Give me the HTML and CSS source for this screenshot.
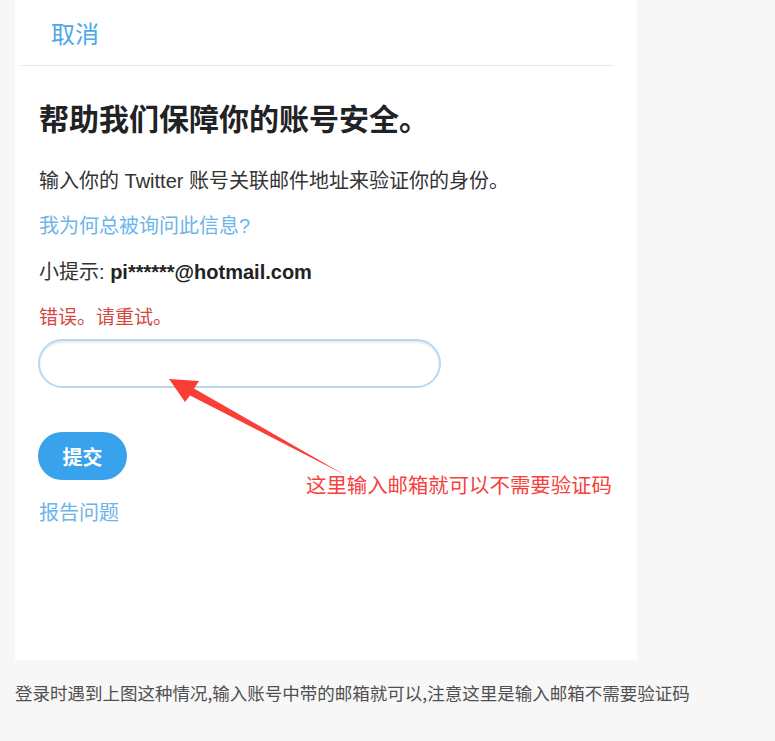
FILE: index.html
```html
<!DOCTYPE html>
<html lang="zh-CN">
<head>
<meta charset="utf-8">
<title>帮助我们保障你的账号安全</title>
<link rel="stylesheet" href="styles.css">
</head>
<body>
<div class="page">
  <div class="panel">
    <div class="header"><span class="cancel">取消</span></div>
    <div class="content">
      <h1 class="title">帮助我们保障你的账号安全。</h1>
      <p class="desc">输入你的 Twitter 账号关联邮件地址来验证你的身份。</p>
      <p class="link">我为何总被询问此信息?</p>
      <p class="hint">小提示: <b>pi******@hotmail.com</b></p>
      <p class="error">错误。请重试。</p>
      <div class="input"></div>
      <div class="button">提交</div>
      <p class="link report">报告问题</p>
    </div>
    <svg class="arrow" width="622" height="660" viewBox="0 0 622 660">
      <polygon points="154,379 184,381 179,388.5 330,475 175,395.5 170,402" fill="#fb3d38"/>
    </svg>
    <div class="note">这里输入邮箱就可以不需要验证码</div>
  </div>
  <p class="caption">登录时遇到上图这种情况,输入账号中带的邮箱就可以,注意这里是输入邮箱不需要验证码</p>
</div>
</body>
</html>
```
FILE: styles.css
```css
* { box-sizing: border-box; }
html, body {
  margin: 0;
  padding: 0;
  background: #f7f7f7;
}
body {
  font-family: "Liberation Sans", "Noto Sans CJK SC", sans-serif;
  color: #333;
}
.page {
  padding-left: 15px;
}
.panel {
  position: relative;
  width: 622px;
  height: 660px;
  background: #fff;
}
.header {
  margin: 0 24px 0 6px;
  height: 66px;
  border-bottom: 1px solid #e3e8ec;
  padding-left: 30px;
  padding-top: 19px;
}
.cancel {
  display: block;
  font-size: 24px;
  line-height: 31px;
  color: #4ea8ea;
}
.content {
  padding-left: 24px;
}
.title {
  margin: 36px 0 0;
  font-size: 30px;
  line-height: 36px;
  font-weight: bold;
  color: #1f2326;
}
.desc, .link, .hint, .error {
  margin: 0;
  font-size: 20px;
  line-height: 28px;
}
.desc {
  margin-top: 29px;
  color: #333;
}
.link {
  margin-top: 17px;
  color: #6cb5ea;
}
.hint {
  margin-top: 18px;
  color: #333;
}
.hint b {
  color: #222;
}
.error {
  margin-top: 18px;
  font-size: 19px;
  color: #d4483f;
}
.input {
  margin-top: 7px;
  margin-left: -1px;
  width: 403px;
  height: 49px;
  border: 2px solid #b5d8f3;
  border-radius: 25px;
  box-shadow: inset 0 2px 2px rgba(0, 0, 0, 0.07);
}
.button {
  margin-top: 44px;
  margin-left: -1px;
  width: 89px;
  height: 48px;
  border-radius: 24px;
  background: #38a3ec;
  color: #fff;
  font-size: 20px;
  font-weight: bold;
  display: flex;
  align-items: center;
  justify-content: center;
}
.report {
  margin-top: 19px;
}
.arrow {
  position: absolute;
  left: 0;
  top: 0;
  pointer-events: none;
}
.note {
  position: absolute;
  left: 291px;
  top: 472px;
  font-size: 20.4px;
  line-height: 24px;
  color: #f8403c;
  font-family: "Noto Sans CJK SC", sans-serif;
}
.caption {
  margin: 21px 0 0;
  font-family: "Noto Sans CJK SC", sans-serif;
  font-size: 17.5px;
  line-height: 24px;
  color: #505050;
}
```
